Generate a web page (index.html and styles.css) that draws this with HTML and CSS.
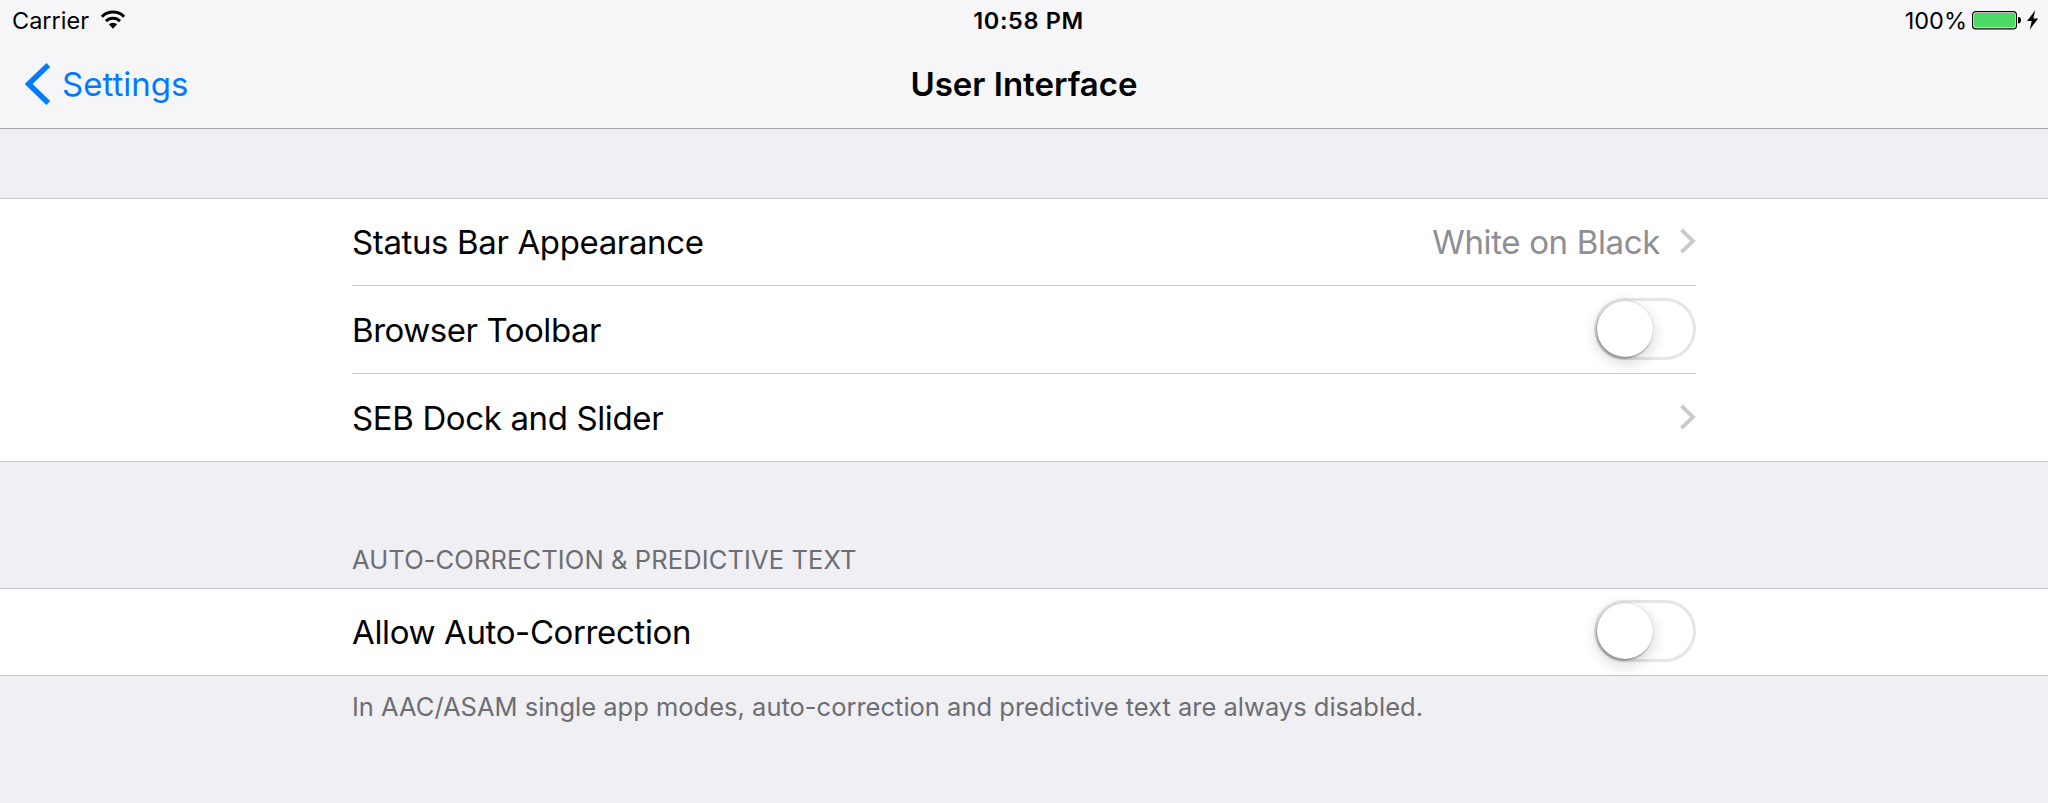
FILE: index.html
```html
<!DOCTYPE html>
<html lang="en">
<head>
<meta charset="utf-8">
<title>User Interface</title>
<link rel="stylesheet" href="styles.css">
</head>
<body>
<header class="top">
  <div class="status">
    <div class="status-left">
      <span class="carrier">Carrier</span>
      <svg class="wifi" width="26" height="20" viewBox="0 0 26 20">
        <path d="M1.9 6.7a15.7 15.7 0 0 1 22.2 0M6 11.1a9.9 9.9 0 0 1 14 0" fill="none" stroke="#000" stroke-width="3"/>
        <path d="M8.8 14.3a6.2 6.2 0 0 1 8.4 0L13 18.7z"/>
      </svg>
    </div>
    <span class="time">10:58 PM</span>
    <div class="status-right">
      <span class="percent">100%</span>
      <svg class="battery" width="50" height="20" viewBox="0 0 50 20">
        <rect x=".6" y="1.6" width="43.8" height="17.3" rx="3.2" fill="#fff" stroke="#000" stroke-width="1.2"/>
        <rect x="2" y="3" width="41" height="14.5" rx="1.6" fill="#4cd964"/>
        <path d="M46 7c2 0 3 1 3 3.2S48 13.5 46 13.5z"/>
      </svg>
      <svg class="bolt" width="12" height="20" viewBox="0 0 12 20">
        <path d="M8.2.3 0 11.1h4.7L2.8 19.4 11.2 8.6H6.4z"/>
      </svg>
    </div>
  </div>
  <nav class="nav">
    <a class="back">
      <svg width="26" height="42" viewBox="0 0 26 42"><path d="M23.3 2 3.7 21l19.6 19" fill="none" stroke="#007aff" stroke-width="5.4"/></svg>
      <span class="back-label">Settings</span>
    </a>
    <h1 class="title">User Interface</h1>
  </nav>
</header>
<main>
  <section class="group group-first">
    <div class="row">
      <span class="label">Status Bar Appearance</span>
      <span class="value">White on Black</span>
      <svg class="chevron" width="17" height="26" viewBox="0 0 17 26"><path d="M2.4 1.8 14 13 2.4 24.2" fill="none" stroke="#c7c7cc" stroke-width="3.8"/></svg>
    </div>
    <div class="row">
      <span class="label toolbar">Browser Toolbar</span>
      <span class="switch"><span class="knob"></span></span>
    </div>
    <div class="row">
      <span class="label">SEB Dock and Slider</span>
      <svg class="chevron" width="17" height="26" viewBox="0 0 17 26"><path d="M2.4 1.8 14 13 2.4 24.2" fill="none" stroke="#c7c7cc" stroke-width="3.8"/></svg>
    </div>
  </section>
  <h2 class="group-header">AUTO-CORRECTION &amp; PREDICTIVE TEXT</h2>
  <section class="group">
    <div class="row">
      <span class="label">Allow Auto-Correction</span>
      <span class="switch"><span class="knob"></span></span>
    </div>
  </section>
  <p class="group-footer">In AAC/ASAM single app modes, auto-correction and predictive text are always disabled.</p>
</main>
</body>
</html>
```
FILE: styles.css
```css
* { box-sizing: border-box; }
body {
  margin: 0;
  height: 803px;
  overflow: hidden;
  background: #efeff4;
  color: #000;
  font-family: Inter, "Liberation Sans", sans-serif;
  font-size: 33px;
  white-space: nowrap;
}
svg { display: block; flex: none; }
.top {
  height: 129px;
  background: #f6f6f8;
  border-bottom: 1px solid #a7a7ab;
}
.status {
  display: grid;
  grid-template-columns: 1fr auto 1fr;
  height: 40px;
  padding: 0 9px 0 12px;
  align-items: center;
  font-size: 23.5px;
}
.status-left, .status-right { display: flex; align-items: center; }
.status-right { justify-content: flex-end; }
.wifi { margin-left: 11px; }
.time { font-weight: 600; letter-spacing: .65px; position: relative; left: 3px; }
.battery { margin-left: 5px; }
.bolt { margin-left: 5px; }
.nav {
  display: grid;
  grid-template-columns: 1fr auto 1fr;
  align-items: center;
  height: 88px;
}
.back { display: flex; align-items: center; padding-left: 25px; color: #007aff; }
.back-label { margin-left: 11px; }
.title { margin: 0; font-size: 33px; font-weight: 600; }
.group {
  background: #fff;
  border: solid #c8c7cc;
  border-width: 1px 0;
  padding: 0 352px;
}
.group-first { margin-top: 69px; }
.row { display: flex; align-items: center; height: 86px; }
.row + .row { height: 88px; border-top: 1px solid #c8c7cc; }
.label { flex: 1; letter-spacing: -.37px; }
.toolbar { letter-spacing: -.45px; }
.value { color: #8e8e93; letter-spacing: -.35px; }
.chevron { margin: 0 0 2px 19px; }
.switch {
  width: 102px;
  height: 62px;
  margin-bottom: 1px;
  border: 3px solid #e5e5e5;
  border-radius: 31px;
}
.row:only-child .switch { margin-bottom: 2px; }
.knob {
  display: block;
  width: 56px;
  height: 56px;
  border-radius: 28px;
  background: #fff;
  box-shadow: 0 0 1px 0 rgba(0,0,0,.3), -1px 2px 2px rgba(0,0,0,.28), 0 5px 14px 2px rgba(0,0,0,.14);
}
.group-header {
  margin: 0;
  height: 126px;
  padding: 83px 352px 0;
  font-size: 25.5px;
  letter-spacing: .12px;
  line-height: 30px;
  font-weight: 400;
  color: #6d6d72;
}
.group-footer {
  margin: 0;
  padding: 16px 352px 0;
  font-size: 25.5px;
  line-height: 30px;
  color: #6d6d72;
}
```
